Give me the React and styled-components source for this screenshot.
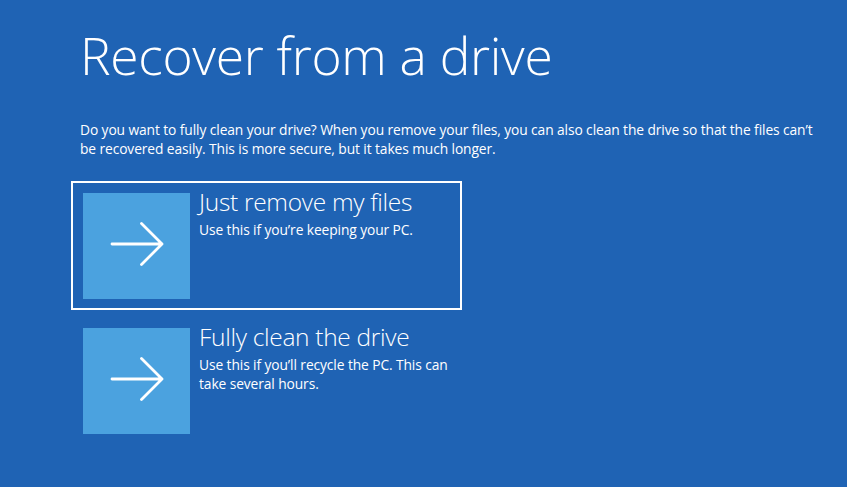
import styled, { createGlobalStyle } from 'styled-components';

const GlobalStyle = createGlobalStyle`
  html, body {
    margin: 0;
    padding: 0;
    background: #1f63b4;
  }
  body {
    font-family: 'Open Sans', 'Segoe UI', sans-serif;
    color: #ffffff;
  }
`;

const Page = styled.div`
  width: 847px;
  height: 487px;
  box-sizing: border-box;
  padding: 23px 0 0 80px;
  background: #1f63b4;
  overflow: hidden;
`;

const Title = styled.h1`
  margin: 0;
  font-size: 51.5px;
  font-weight: 300;
  line-height: 64px;
  letter-spacing: -0.3px;
`;

const Intro = styled.p`
  margin: 34px 0 0;
  width: 742px;
  font-size: 13.8px;
  line-height: 18.5px;
  letter-spacing: -0.1px;
`;

const Options = styled.div`
  display: flex;
  flex-direction: column;
  gap: 6px;
  margin: 23px 0 0 -9px;
`;

const Option = styled.button`
  display: flex;
  gap: 9px;
  width: 391px;
  box-sizing: border-box;
  padding: 10px 10px 9px;
  border: 2px solid ${(p) => (p.$selected ? '#ffffff' : 'transparent')};
  background: transparent;
  color: inherit;
  font: inherit;
  text-align: left;
  cursor: pointer;
`;

const Tile = styled.div`
  flex: none;
  width: 107px;
  height: 106px;
  background: #4ba2df;
  display: flex;
  align-items: center;
  justify-content: center;
`;

const Body = styled.div`
  display: flex;
  flex-direction: column;
  width: 256px;
`;

const Heading = styled.div`
  margin-top: -5px;
  font-size: 24.5px;
  font-weight: 300;
  line-height: 28px;
  letter-spacing: -0.3px;
`;

const Detail = styled.div`
  margin-top: 4px;
  font-size: 13.8px;
  line-height: 19px;
  letter-spacing: -0.1px;
`;

function Arrow() {
  return (
    <svg width="56" height="48" viewBox="0 0 56 48" fill="none">
      <path
        d="M3 22H53M32.5 1.5L53 22L32.5 42.5"
        stroke="#ffffff"
        strokeWidth="2.8"
        strokeLinecap="round"
        strokeLinejoin="round"
      />
    </svg>
  );
}

const options = [
  {
    title: 'Just remove my files',
    detail: 'Use this if you’re keeping your PC.',
    selected: true,
  },
  {
    title: 'Fully clean the drive',
    detail: 'Use this if you’ll recycle the PC. This can take several hours.',
  },
];

export default function App() {
  return (
    <>
      <GlobalStyle />
      <Page>
        <Title>Recover from a drive</Title>
        <Intro>
          Do you want to fully clean your drive? When you remove your files, you can also clean
          the drive so that the files can’t be recovered easily. This is more secure, but it takes
          much longer.
        </Intro>
        <Options>
          {options.map((o) => (
            <Option key={o.title} $selected={o.selected}>
              <Tile>
                <Arrow />
              </Tile>
              <Body>
                <Heading>{o.title}</Heading>
                <Detail>{o.detail}</Detail>
              </Body>
            </Option>
          ))}
        </Options>
      </Page>
    </>
  );
}
